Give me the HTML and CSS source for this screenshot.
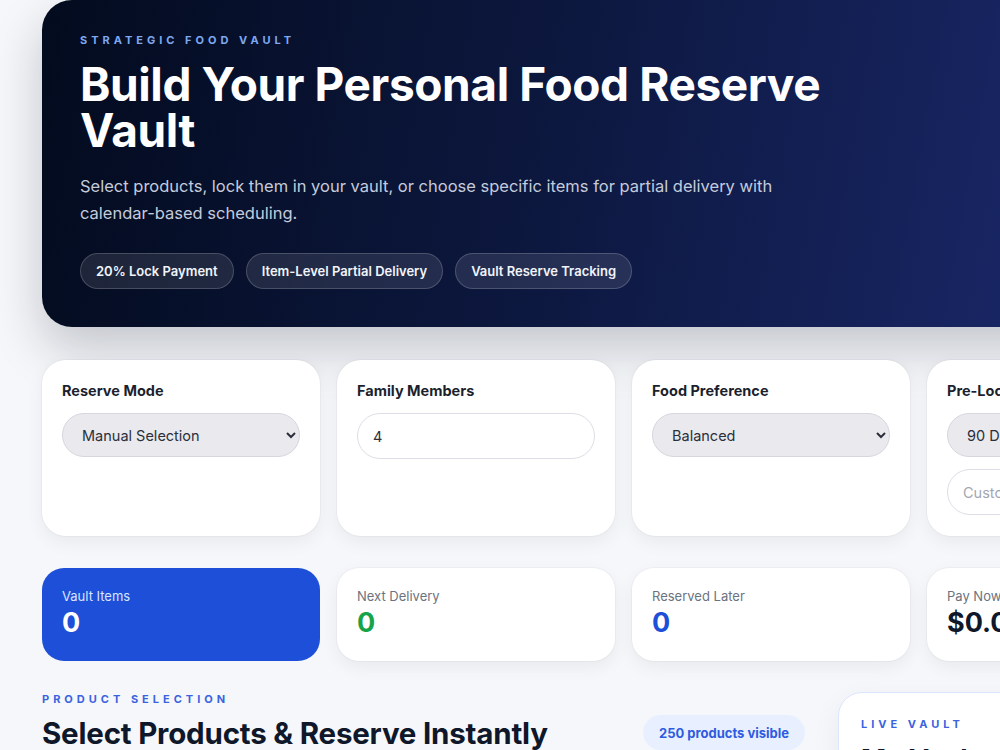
FILE: index.html
```html
<!DOCTYPE html>
<html lang="en">

<head>
    <meta charset="UTF-8">
    <meta name="viewport" content="width=device-width, initial-scale=1.0">
    <title>Food Reserve Vault</title>
    <link rel="stylesheet" href="styles.css">
</head>

<body>

    <div class="page">
        <header class="hero">
            <div class="hero__eyebrow">Strategic Food Vault</div>
            <h1 class="hero__title">Build Your Personal Food Reserve Vault</h1>
            <p class="hero__text">Select products, lock them in your vault, or choose specific items for partial delivery with calendar-based scheduling.</p>
            <div class="hero__chips">
                <span class="chip">20% Lock Payment</span>
                <span class="chip">Item-Level Partial Delivery</span>
                <span class="chip">Vault Reserve Tracking</span>
            </div>
        </header>

        <section class="controls">
            <div class="control">
                <label class="control__label" for="mode">Reserve Mode</label>
                <select id="mode" class="field field--select">
                    <option>Manual Selection</option>
                    <option>Auto Build</option>
                </select>
            </div>
            <div class="control">
                <label class="control__label" for="family">Family Members</label>
                <input id="family" class="field" type="number" value="4" min="1">
            </div>
            <div class="control">
                <label class="control__label" for="pref">Food Preference</label>
                <select id="pref" class="field field--select">
                    <option>Balanced</option>
                    <option>Vegetarian</option>
                </select>
            </div>
            <div class="control">
                <label class="control__label" for="period">Pre-Lock Period</label>
                <select id="period" class="field field--select">
                    <option>90 Days</option>
                    <option>180 Days</option>
                </select>
                <input class="field" type="text" placeholder="Custom days">
            </div>
        </section>

        <section class="stats">
            <div class="stat stat--primary">
                <div class="stat__label">Vault Items</div>
                <div class="stat__value">0</div>
            </div>
            <div class="stat">
                <div class="stat__label">Next Delivery</div>
                <div class="stat__value stat__value--green">0</div>
            </div>
            <div class="stat">
                <div class="stat__label">Reserved Later</div>
                <div class="stat__value stat__value--blue">0</div>
            </div>
            <div class="stat">
                <div class="stat__label">Pay Now</div>
                <div class="stat__value">$0.00</div>
            </div>
        </section>

        <div class="main">
            <section class="products">
                <div class="products__head">
                    <div>
                        <div class="eyebrow">Product Selection</div>
                        <h2 class="products__title">Select Products &amp; Reserve Instantly</h2>
                    </div>
                    <span class="badge">250 products visible</span>
                </div>
            </section>

            <aside class="vault">
                <div class="eyebrow">Live Vault</div>
                <h2 class="vault__title">My Vault</h2>
            </aside>
        </div>
    </div>

</body>

</html>
```

FILE: styles.css
```css
* {
    margin: 0;
    padding: 0;
    box-sizing: border-box;
}

:root {
    --navy: #0f172a;
    --blue: #1d4fd8;
    --line: #dcdee6;
    --muted: #6b7280;
}

html,
body {
    overflow: hidden;
}

body {
    font-family: Inter, "Noto Sans", sans-serif;
    background: #f6f7fa;
    color: var(--navy);
}

.page {
    width: 1205px;
    padding-left: 42px;
}

/* hero */

.hero {
    height: 327px;
    padding: 33px 38px 0;
    border-radius: 30px;
    border-top-right-radius: 0;
    background: linear-gradient(100deg, #030b1e 0%, #0d1840 45%, #1c2b72 100%);
    color: #fff;
    box-shadow: 0 22px 50px rgba(15, 23, 42, 0.22);
}

.hero__eyebrow {
    font-size: 11px;
    font-weight: 700;
    letter-spacing: 4px;
    text-transform: uppercase;
    color: #7ea8f2;
}

.hero__title {
    margin-top: 14px;
    max-width: 800px;
    font-size: 46px;
    line-height: 46px;
    font-weight: 700;
    letter-spacing: -0.4px;
}

.hero__text {
    margin-top: 20px;
    max-width: 730px;
    font-size: 16.5px;
    line-height: 27px;
    color: #c4cbdb;
}

.hero__chips {
    display: flex;
    gap: 12px;
    margin-top: 26px;
}

.chip {
    display: inline-flex;
    align-items: center;
    height: 36px;
    padding: 0 15px;
    border-radius: 18px;
    border: 1px solid rgba(255, 255, 255, 0.18);
    background: rgba(255, 255, 255, 0.1);
    font-size: 13px;
    font-weight: 600;
    color: #f1f4fa;
}

/* controls */

.controls {
    display: grid;
    grid-template-columns: repeat(4, minmax(0, 1fr));
    gap: 17px;
    margin-top: 33px;
}

.control {
    display: flex;
    flex-direction: column;
    gap: 12px;
    height: 176px;
    padding: 21px 20px;
    border-radius: 24px;
    background: #fff;
    box-shadow: 0 6px 18px rgba(15, 23, 42, 0.06), 0 0 0 1px rgba(15, 23, 42, 0.03);
}

.control__label {
    font-size: 14.5px;
    line-height: 20px;
    font-weight: 700;
    color: #1b1f2e;
}

.field {
    width: 100%;
    height: 46px;
    flex-shrink: 0;
    padding: 0 15px;
    border-radius: 23px;
    border: 1px solid var(--line);
    background: #fff;
    font-family: inherit;
    font-size: 14.5px;
    color: #2b2f3a;
    outline: none;
}

.field--select {
    background: #e9e9ee;
    border-color: #d6d7de;
    height: 44px;
}

.field::placeholder {
    color: #a2a6b2;
}

/* stats */

.stats {
    display: grid;
    grid-template-columns: repeat(4, minmax(0, 1fr));
    gap: 17px;
    margin-top: 32px;
}

.stat {
    height: 93px;
    padding: 20px 20px;
    border-radius: 22px;
    background: #fff;
    box-shadow: 0 6px 18px rgba(15, 23, 42, 0.06), 0 0 0 1px rgba(15, 23, 42, 0.03);
}

.stat__label {
    font-size: 13px;
    color: var(--muted);
}

.stat__value {
    margin-top: 2px;
    font-size: 27px;
    line-height: 34px;
    font-weight: 700;
    color: var(--navy);
}

.stat__value--green {
    color: #16a34a;
}

.stat__value--blue {
    color: var(--blue);
}

.stat--primary {
    background: var(--blue);
    box-shadow: none;
}

.stat--primary .stat__label {
    color: #dbe5ff;
}

.stat--primary .stat__value {
    color: #fff;
}

/* products and vault */

.main {
    display: grid;
    grid-template-columns: 763px 1fr;
    gap: 33px;
    margin-top: 31px;
}

.eyebrow {
    font-size: 11px;
    font-weight: 700;
    letter-spacing: 4px;
    text-transform: uppercase;
    color: #3b63e0;
}

.products__head {
    display: flex;
    justify-content: space-between;
    align-items: flex-end;
}

.products__title {
    margin-top: 9px;
    font-size: 29.5px;
    line-height: 36px;
    font-weight: 700;
    letter-spacing: -0.2px;
}

.badge {
    display: inline-flex;
    align-items: center;
    height: 35px;
    padding: 0 16px;
    margin-bottom: 1px;
    border-radius: 18px;
    background: #e8f0ff;
    font-size: 13px;
    font-weight: 700;
    color: #2f5be0;
}

.vault {
    height: 300px;
    padding: 24px 22px;
    border-radius: 24px;
    border: 1px solid #dbe6ff;
    background: #fff;
    box-shadow: 0 10px 30px rgba(15, 23, 42, 0.06);
}

.vault__title {
    margin-top: 12px;
    font-size: 27px;
    font-weight: 700;
}
```
